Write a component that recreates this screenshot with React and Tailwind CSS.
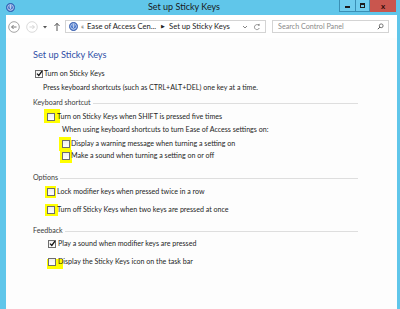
import React from "react";

const F = { fontFamily: 'Lato, "Noto Sans", sans-serif' };

function EaseIcon({ size = 9 }) {
  return (
    <svg width={size} height={size} viewBox="0 0 10 10">
      <circle cx="5" cy="5" r="4.6" fill="#3f6fc7" stroke="#24479a" strokeWidth="0.6" />
      <circle cx="5" cy="5" r="3.2" fill="none" stroke="#ffffff" strokeWidth="0.7" />
      <circle cx="5" cy="3.3" r="0.7" fill="#fff" />
      <path d="M3.4 4.4 H6.6 M5 4.4 V6 L4 7.4 M5 6 L6 7.4" stroke="#fff" strokeWidth="0.6" fill="none" />
    </svg>
  );
}

function Check({ checked, hl }) {
  return (
    <span className="relative inline-flex shrink-0 items-center justify-center w-[8px] h-[8px]">
      {hl && <span className={"absolute bg-[#ffff00] " + hl} />}
      <span className="relative w-[8px] h-[8px] border border-[#6d6d6d] bg-gradient-to-b from-[#f0f0f0] to-white flex items-center justify-center">
        {checked && (
          <svg width="7" height="7" viewBox="0 0 7 7" className="absolute -top-[1px] left-0">
            <path d="M1 3.6 L2.8 5.4 L6 1.2" stroke="#111" strokeWidth="1.3" fill="none" />
          </svg>
        )}
      </span>
    </span>
  );
}

function Row({ mt, pl, children }) {
  return (
    <div className={"h-[12px] flex items-center " + mt + " " + pl}>{children}</div>
  );
}

function Section({ mt, label }) {
  return (
    <div className={"h-[12px] flex items-center w-[325px] " + mt}>
      <span className="text-[7.1px] text-[#3a3a3a] leading-none">{label}</span>
      <span className="flex-1 h-px bg-[#dedede] ml-[2px]" />
    </div>
  );
}

export default function App() {
  return (
    <div className="w-[400px] h-[309px] bg-[#60c6ea] flex flex-col overflow-hidden text-[#1e1e1e]" style={F}>
      {/* title bar */}
      <div className="h-[15px] shrink-0 flex items-start relative">
        <div className="ml-[6px] mt-[3px]">
          <EaseIcon size={9} />
        </div>
        <div className="flex-1 flex justify-center pt-[1px] pl-[14px]">
          <span className="text-[9px] leading-[12px] text-[#1a1a1a]">Set up Sticky Keys</span>
        </div>
        <div className="flex mr-[4px] h-[12px]">
          <div className="w-[17px] h-[12px] border border-[#3a8fb5] border-t-0 bg-[#6fcdee] flex items-center justify-center">
            <span className="w-[5px] h-[2px] bg-[#1c1c1c] mt-[3px]" />
          </div>
          <div className="w-[14px] h-[12px] border-b border-r border-[#3a8fb5] bg-[#6fcdee] flex items-center justify-center">
            <span className="w-[5px] h-[5px] border border-[#1c1c1c] border-t-2" />
          </div>
          <div className="w-[26px] h-[12px] bg-[#c9564e] flex items-center justify-center">
            <span className="text-[8px] font-bold leading-none text-[#2a0a08]">x</span>
          </div>
        </div>
      </div>

      {/* window body */}
      <div className="flex-1 ml-[6px] mr-[3px] bg-[#fdfdfd] flex flex-col">
        {/* nav bar */}
        <div className="h-[23px] shrink-0 flex items-center bg-white">
          <svg width="12" height="12" viewBox="0 0 12 12" className="ml-[2px]">
            <circle cx="6" cy="6" r="5.3" fill="#fff" stroke="#8d8d8d" strokeWidth="0.8" />
            <path d="M8.5 6 H3.6 M5.6 4 L3.6 6 L5.6 8" stroke="#6a6a6a" strokeWidth="0.9" fill="none" />
          </svg>
          <svg width="12" height="12" viewBox="0 0 12 12" className="ml-[6px]">
            <circle cx="6" cy="6" r="5.3" fill="#fff" stroke="#d0d0d0" strokeWidth="0.8" />
            <path d="M3.5 6 H8.4 M6.4 4 L8.4 6 L6.4 8" stroke="#d0d0d0" strokeWidth="0.9" fill="none" />
          </svg>
          <svg width="6" height="6" viewBox="0 0 6 6" className="ml-[4px]">
            <path d="M1 2 L5 2 L3 4.5 Z" fill="#555" />
          </svg>
          <svg width="8" height="10" viewBox="0 0 8 10" className="ml-[5px]">
            <path d="M4 9 V1.5 M1.5 4 L4 1.3 L6.5 4" stroke="#444" strokeWidth="0.9" fill="none" />
          </svg>
          {/* address */}
          <div className="ml-[4px] w-[201px] h-[13px] border border-[#d4d4d4] bg-white flex items-center pl-[3px]">
            <EaseIcon size={9} />
            <span className="text-[7px] text-[#555] ml-[3px] leading-none">«</span>
            <span className="text-[7.6px] leading-none ml-[3px] text-[#222]">Ease of Access Cen...</span>
            <span className="text-[5px] leading-none ml-[5px] text-[#222]">▶</span>
            <span className="text-[7.6px] leading-none ml-[4px] text-[#222]">Set up Sticky Keys</span>
            <span className="flex-1" />
            <svg width="6" height="6" viewBox="0 0 6 6">
              <path d="M1 2 L3 4 L5 2" stroke="#666" strokeWidth="0.8" fill="none" />
            </svg>
            <svg width="8" height="8" viewBox="0 0 8 8" className="ml-[5px] mr-[4px]">
              <path d="M6.2 3 A2.5 2.5 0 1 0 6.3 5" stroke="#777" strokeWidth="0.8" fill="none" />
              <path d="M4.6 1.6 L6.5 2.8 L6.6 0.8 Z" fill="#777" />
            </svg>
          </div>
          {/* search */}
          <div className="ml-[6px] w-[117px] h-[13px] border border-[#d4d4d4] bg-white flex items-center pl-[5px] pr-[4px]">
            <span className="text-[7.2px] leading-none text-[#8a8a8a] flex-1">Search Control Panel</span>
            <svg width="7" height="7" viewBox="0 0 7 7">
              <circle cx="4.2" cy="2.8" r="1.9" stroke="#555" strokeWidth="0.8" fill="none" />
              <path d="M2.9 4.1 L0.8 6.2" stroke="#555" strokeWidth="1" />
            </svg>
          </div>
        </div>

        {/* content */}
        <div className="flex flex-col pl-[27px] pt-[10px] text-[7.1px]">
          <div className="h-[14px] flex items-center">
            <span className="text-[9.2px] leading-none text-[#2f4fa6]">Set up Sticky Keys</span>
          </div>

          <Row mt="mt-[6px]" pl="pl-[2px]">
            <Check checked />
            <span className="leading-none ml-[1px]">Turn on Sticky Keys</span>
          </Row>
          <Row mt="mt-[2px]" pl="pl-[10px]">
            <span className="leading-none">Press keyboard shortcuts (such as CTRL+ALT+DEL) one key at a time.</span>
          </Row>

          <Section mt="mt-[3px]" label="Keyboard shortcut" />
          <Row mt="mt-[2px]" pl="pl-[14px]">
            <Check hl="-left-[3px] -right-[5px] -top-[4px] -bottom-[2px]" />
            <span className="relative leading-none ml-[2px]">Turn on Sticky Keys when SHIFT is pressed five times</span>
          </Row>
          <Row mt="mt-[1px]" pl="pl-[29px]">
            <span className="leading-none">When using keyboard shortcuts to turn Ease of Access settings on:</span>
          </Row>
          <Row mt="mt-[2px]" pl="pl-[29px]">
            <Check hl="-left-[3px] -right-[1px] -top-[3px] -bottom-[3px]" />
            <span className="relative leading-none ml-[1px]">Display a warning message when turning a setting on</span>
          </Row>
          <Row mt="mt-[0px]" pl="pl-[29px]">
            <Check hl="-left-[2px] -right-[2px] -top-[2px] -bottom-[3px]" />
            <span className="relative leading-none ml-[1px]">Make a sound when turning a setting on or off</span>
          </Row>

          <Section mt="mt-[10px]" label="Options" />
          <Row mt="mt-[2px]" pl="pl-[14px]">
            <Check hl="-left-[2px] -right-[1px] -top-[2px] -bottom-[2px]" />
            <span className="relative leading-none ml-[2px]">Lock modifier keys when pressed twice in a row</span>
          </Row>
          <Row mt="mt-[6px]" pl="pl-[14px]">
            <Check hl="-left-[2px] -right-[3px] -top-[2px] -bottom-[2px]" />
            <span className="relative leading-none ml-[2px]">Turn off Sticky Keys when two keys are pressed at once</span>
          </Row>

          <Section mt="mt-[9px]" label="Feedback" />
          <Row mt="mt-[1px]" pl="pl-[15px]">
            <Check checked />
            <span className="leading-none ml-[2px]">Play a sound when modifier keys are pressed</span>
          </Row>
          <Row mt="mt-[6px]" pl="pl-[15px]">
            <Check hl="-left-[1px] -right-[7px] top-[1px] -bottom-[3px]" />
            <span className="relative leading-none ml-[2px]">Display the Sticky Keys icon on the task bar</span>
          </Row>
        </div>
      </div>
    </div>
  );
}
